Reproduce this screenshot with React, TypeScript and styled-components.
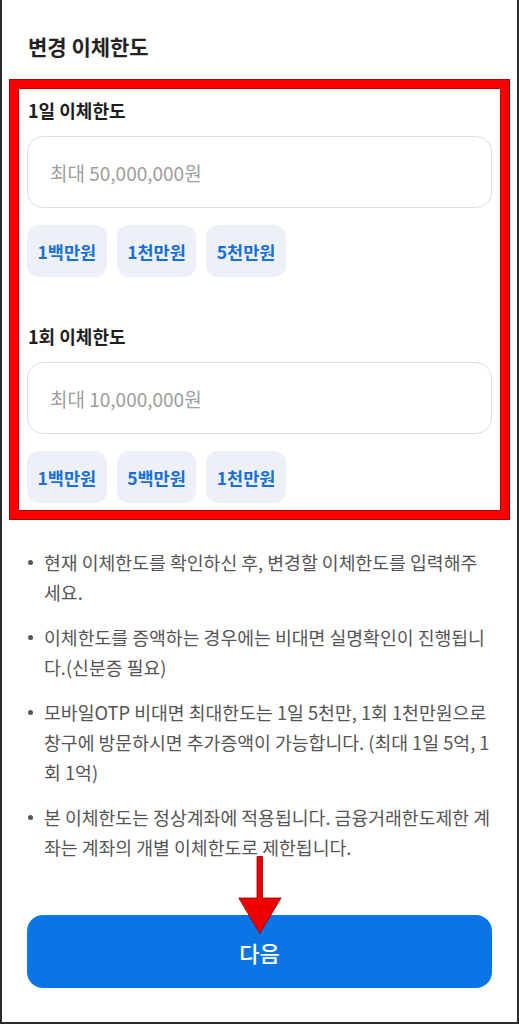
import React from 'react'
import styled, { createGlobalStyle } from 'styled-components'

const GlobalStyle = createGlobalStyle`
  body {
    margin: 0;
    background: #fff;
    font-family: "Noto Sans CJK KR", "Noto Sans", sans-serif;
  }
  * {
    box-sizing: border-box;
  }
`

const Frame = styled.div`
  width: 519px;
  min-height: 1024px;
  border: 2px solid #2b2b2b;
  border-top: none;
  padding: 0 25px;
  display: flex;
  flex-direction: column;
`

const Title = styled.h1`
  margin: 33px 0 0 1px;
  font-size: 21px;
  line-height: 26px;
  font-weight: 700;
  color: #222;
`

const Highlight = styled.section`
  margin: 21px -17px 0;
  border: 8px solid #ff0000;
  box-shadow: 0 0 0 1px #b30000, inset 0 0 0 1px #c00000;
  padding: 10px 9px 8px;
`

const Group = styled.div<{ $first?: boolean }>`
  margin-top: ${p => (p.$first ? '0' : '47px')};
  display: flex;
  flex-direction: column;
`

const Label = styled.div`
  margin-left: 1px;
  font-size: 18px;
  line-height: 24px;
  font-weight: 700;
  color: #1e1e1e;
`

const AmountInput = styled.input`
  margin-top: 14px;
  height: 72px;
  width: 100%;
  border: 1px solid #dedede;
  border-radius: 16px;
  padding: 0 22px;
  font-family: "Noto Sans CJK KR", "Noto Sans", sans-serif;
  font-size: 19px;
  color: #222;
  background: #fff;
  outline: none;

  &::placeholder {
    color: #9d9d9d;
  }
`

const ChipRow = styled.div`
  margin-top: 17px;
  display: flex;
  gap: 10px;
`

const Chip = styled.button`
  height: 52px;
  padding: 0 10.5px;
  border: none;
  border-radius: 12px;
  background: #edf1f7;
  color: #1870d5;
  font-family: "Noto Sans CJK KR", "Noto Sans", sans-serif;
  font-size: 17.5px;
  font-weight: 700;
  cursor: pointer;
`

const Notes = styled.ul`
  list-style: none;
  margin: 28px 0 0;
  padding: 0;
  display: flex;
  flex-direction: column;
  gap: 15px;
`

const Note = styled.li`
  display: flex;
  align-items: flex-start;
  gap: 11px;
  padding-left: 1px;
  font-size: 18.3px;
  line-height: 30px;
  color: #555;
`

const Dot = styled.span`
  flex: none;
  width: 5px;
  height: 5px;
  margin-top: 13px;
  border-radius: 50%;
  background: #555;
`

const NoteText = styled.span`
  flex: 1;
`

const Footer = styled.div`
  position: relative;
  margin-top: 53px;
`

const NextButton = styled.button`
  width: 100%;
  height: 73px;
  border: none;
  border-radius: 16px;
  background: #0a76e6;
  color: #fff;
  font-family: "Noto Sans CJK KR", "Noto Sans", sans-serif;
  font-size: 22px;
  font-weight: 500;
  cursor: pointer;
`

const Pointer = styled.svg`
  position: absolute;
  left: 211px;
  top: -59px;
  pointer-events: none;
`

const groups = [
  { label: '1일 이체한도', max: '최대 50,000,000원', chips: ['1백만원', '1천만원', '5천만원'] },
  { label: '1회 이체한도', max: '최대 10,000,000원', chips: ['1백만원', '5백만원', '1천만원'] },
]

const notes = [
  '현재 이체한도를 확인하신 후, 변경할 이체한도를 입력해주세요.',
  '이체한도를 증액하는 경우에는 비대면 실명확인이 진행됩니다.(신분증 필요)',
  '모바일OTP 비대면 최대한도는 1일 5천만, 1회 1천만원으로 창구에 방문하시면 추가증액이 가능합니다. (최대 1일 5억, 1회 1억)',
  '본 이체한도는 정상계좌에 적용됩니다. 금융거래한도제한 계좌는 계좌의 개별 이체한도로 제한됩니다.',
]

const App = () => {
  return (
    <>
      <GlobalStyle />
      <Frame>
        <Title>변경 이체한도</Title>
        <Highlight>
          {groups.map((g, i) => (
            <Group key={g.label} $first={i === 0}>
              <Label>{g.label}</Label>
              <AmountInput placeholder={g.max} inputMode="numeric" />
              <ChipRow>
                {g.chips.map(c => (
                  <Chip key={c}>{c}</Chip>
                ))}
              </ChipRow>
            </Group>
          ))}
        </Highlight>
        <Notes>
          {notes.map(n => (
            <Note key={n}>
              <Dot />
              <NoteText>{n}</NoteText>
            </Note>
          ))}
        </Notes>
        <Footer>
          <NextButton>다음</NextButton>
          <Pointer width="44" height="78" viewBox="0 0 44 78">
            <path
              d="M19 0.5 H24.5 V42 H43 L21.8 77.5 L0.8 42 H19 Z"
              fill="#f00000"
              stroke="#8a0000"
              strokeWidth="0.8"
              strokeLinejoin="miter"
            />
          </Pointer>
        </Footer>
      </Frame>
    </>
  )
}

export default App
